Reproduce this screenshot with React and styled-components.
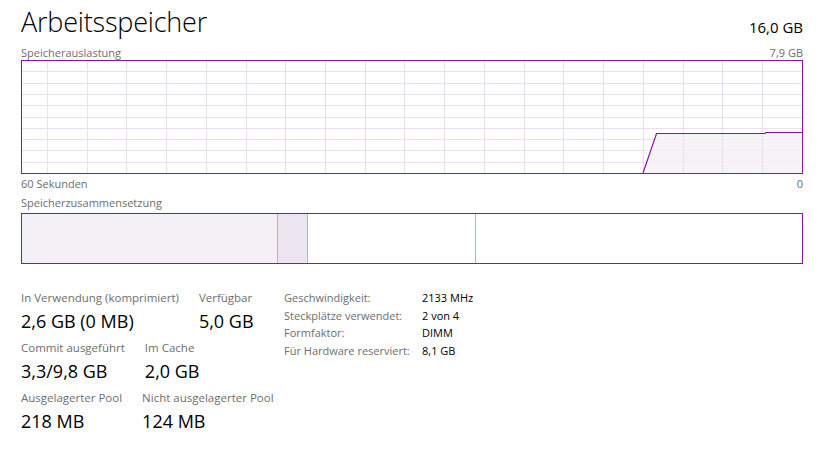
import React from 'react'
import styled, { createGlobalStyle } from 'styled-components'

const PURPLE = '#8b12ae'
const GRID = '#ecdef0'
const FILL = '#f3f1f5'
const LABEL = '#6e6e6e'
const FONT = '"Open Sans", "Noto Sans", "Liberation Sans", sans-serif'

/**
 * Style
 */
const GlobalStyle = createGlobalStyle`
  html, body {
    margin: 0;
    background: #fff;
  }
  body {
    font-family: ${FONT};
    color: #000;
  }
`

const Page = styled.div`
  width: 782px;
  padding: 4px 0 0 21px;
`

const TitleRow = styled.div`
  display: flex;
  justify-content: space-between;
  align-items: flex-end;
`

const Title = styled.h1`
  margin: 0;
  font-size: 27px;
  font-weight: 300;
  line-height: 36px;
  letter-spacing: -0.2px;
`

const Capacity = styled.div`
  font-size: 15px;
  line-height: 20px;
  padding-bottom: 3px;
`

const CaptionRow = styled.div`
  display: flex;
  justify-content: space-between;
  font-size: 11px;
  line-height: 15px;
  color: ${LABEL};
  margin-top: ${(p) => p.$top || 0}px;
`

const Graph = styled.svg`
  display: block;
  width: 782px;
  height: 114px;
`

const Composition = styled.div`
  display: flex;
  height: 49px;
  border: 1px solid ${PURPLE};
  margin-top: 3px;
`

const Segment = styled.div`
  width: ${(p) => (p.$width ? `${p.$width}px` : 'auto')};
  flex: ${(p) => (p.$width ? 'none' : '1')};
  background: ${(p) => p.$bg};
  border-right: ${(p) => (p.$divider ? '1px solid #c8a6d8' : 'none')};
`

const Details = styled.div`
  display: flex;
  align-items: flex-start;
  margin-top: 25px;
`

const Stats = styled.div`
  display: flex;
  flex-direction: column;
  gap: 5px;
  width: 263px;
  flex: none;
`

const StatRow = styled.div`
  display: flex;
  gap: ${(p) => p.$gap}px;
`

const Stat = styled.div`
  display: flex;
  flex-direction: column;
  white-space: nowrap;
`

const StatLabel = styled.div`
  font-size: 11.5px;
  line-height: 17px;
  color: ${LABEL};
`

const StatValue = styled.div`
  font-size: 18px;
  line-height: 25px;
  margin-top: 3px;
  color: #000;
`

const Specs = styled.div`
  display: grid;
  grid-template-columns: 138px auto;
  align-content: start;
  font-size: 11px;
  line-height: 17.7px;
  white-space: nowrap;
`

const SpecLabel = styled.div`
  color: ${LABEL};
`

const SpecValue = styled.div`
  color: #000;
`

/**
 * Data
 */
const W = 782
const H = 113
const vLines = Array.from({ length: 19 }, (_, i) => 26 + i * 39.72)
const hLines = Array.from({ length: 9 }, (_, i) => (i + 1) * 11.3)

const stats = [
  { gap: 20, items: [['In Verwendung (komprimiert)', '2,6 GB (0 MB)'], ['Verfügbar', '5,0 GB']] },
  { gap: 20, items: [['Commit ausgeführt', '3,3/9,8 GB'], ['Im Cache', '2,0 GB']] },
  { gap: 20, items: [['Ausgelagerter Pool', '218 MB'], ['Nicht ausgelagerter Pool', '124 MB']] },
]

const specs = [
  ['Geschwindigkeit:', '2133 MHz'],
  ['Steckplätze verwendet:', '2 von 4'],
  ['Formfaktor:', 'DIMM'],
  ['Für Hardware reserviert:', '8,1 GB'],
]

/**
 * Component
 */
const UsageGraph = () => (
  <Graph viewBox={`0 0 ${W} ${H + 1}`}>
    {vLines.map((x) => (
      <line key={`v${x}`} x1={Math.round(x) + 0.5} y1={0} x2={Math.round(x) + 0.5} y2={H} stroke={GRID} />
    ))}
    {hLines.map((y) => (
      <line key={`h${y}`} x1={0} y1={Math.round(y) + 0.5} x2={W} y2={Math.round(y) + 0.5} stroke={GRID} />
    ))}
    <polygon
      points={`622,113 635.5,73.5 744,73.5 745,72.5 782,72.5 782,113`}
      fill={FILL}
      fillOpacity="0.85"
    />
    {vLines
      .filter((x) => x > 630)
      .map((x) => (
        <line key={`o${x}`} x1={Math.round(x) + 0.5} y1={74} x2={Math.round(x) + 0.5} y2={H} stroke={GRID} />
      ))}
    <polyline
      points="622,113 635.5,73.5 744,73.5 745,72.5 782,72.5"
      fill="none"
      stroke={PURPLE}
      strokeWidth="1.2"
    />
    <rect x={0.5} y={0.5} width={W - 1} height={H} fill="none" stroke={PURPLE} />
  </Graph>
)

const App = () => (
  <>
    <GlobalStyle />
    <Page>
      <TitleRow>
        <Title>Arbeitsspeicher</Title>
        <Capacity>16,0 GB</Capacity>
      </TitleRow>
      <CaptionRow $top={5}>
        <span>Speicherauslastung</span>
        <span>7,9 GB</span>
      </CaptionRow>
      <UsageGraph />
      <CaptionRow $top={2}>
        <span>60 Sekunden</span>
        <span>0</span>
      </CaptionRow>
      <CaptionRow $top={4}>
        <span>Speicherzusammensetzung</span>
      </CaptionRow>
      <Composition>
        <Segment $width={255} $bg={FILL} $divider />
        <Segment $width={29} $bg="#ede4f2" $divider />
        <Segment $width={167} $bg="#fff" $divider />
        <Segment $bg="#fff" />
      </Composition>
      <Details>
        <Stats>
          {stats.map((row, i) => (
            <StatRow key={i} $gap={row.gap}>
              {row.items.map(([label, value]) => (
                <Stat key={label}>
                  <StatLabel>{label}</StatLabel>
                  <StatValue>{value}</StatValue>
                </Stat>
              ))}
            </StatRow>
          ))}
        </Stats>
        <Specs>
          {specs.map(([label, value]) => (
            <React.Fragment key={label}>
              <SpecLabel>{label}</SpecLabel>
              <SpecValue>{value}</SpecValue>
            </React.Fragment>
          ))}
        </Specs>
      </Details>
    </Page>
  </>
)

export default App
